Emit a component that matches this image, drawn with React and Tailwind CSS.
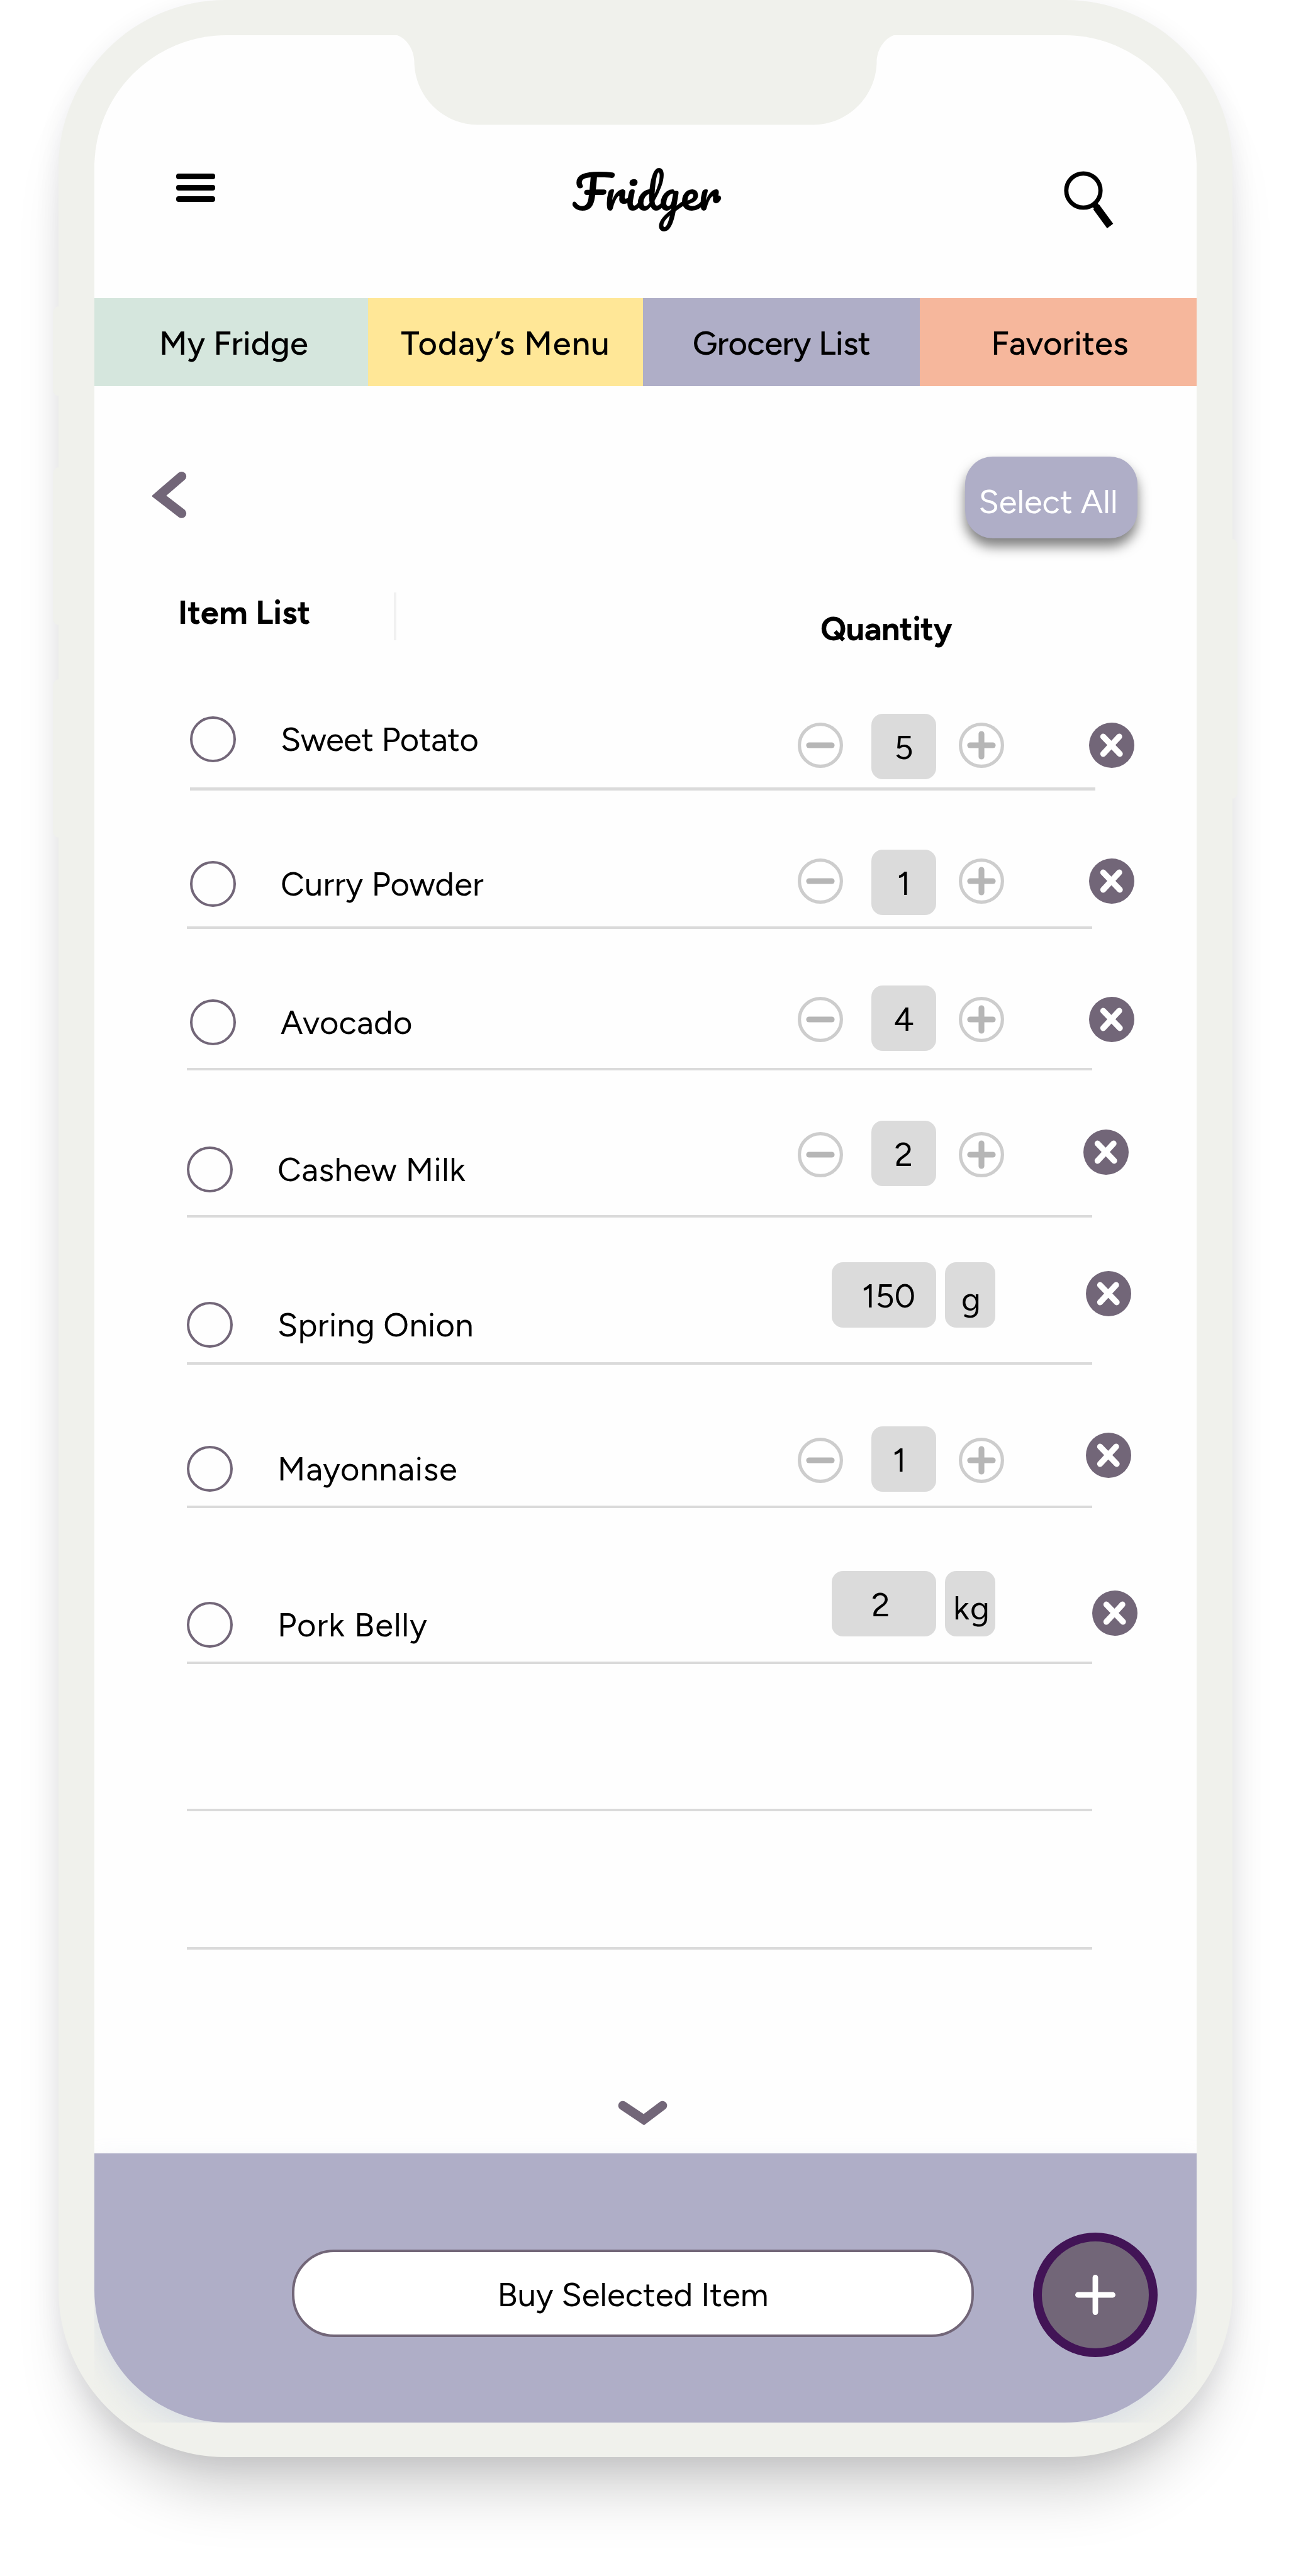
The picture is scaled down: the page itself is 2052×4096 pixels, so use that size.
import React from "react";

const SANS = "font-['Figtree','Lato',sans-serif]";

const TABS = [
  { label: "My Fridge", className: "w-[435px] bg-[#d5e6dd] pl-[8px] tracking-[0.15px]" },
  { label: "Today’s Menu", className: "w-[437px] bg-[#ffe797] tracking-[1.1px]" },
  { label: "Grocery List", className: "w-[440px] bg-[#afaec7] tracking-[-0.6px]" },
  { label: "Favorites", className: "w-[440px] bg-[#f6b79c] pl-[5px] tracking-[0.2px]" },
];

const ITEMS = [
  {
    name: "Sweet Potato", qty: "5",
    row: "h-[157px]", line: "h-[5px] ml-[5px]", label: "mt-[39px] ml-[5px] w-[966px] tracking-[-0.45px]",
    control: "mt-[35px]", step: "mt-[14px]", remove: "mt-[49px] ml-[135px]",
  },
  {
    name: "Curry Powder", qty: "1",
    row: "h-[220px]", line: "h-[4px]", label: "mt-[111.5px] ml-[5px] w-[966px] tracking-[0.2px]",
    control: "mt-[94px]", step: "mt-[14px]", remove: "mt-[107.5px] ml-[135px]",
  },
  {
    name: "Avocado", qty: "4",
    row: "h-[225px]", line: "h-[4px]", label: "mt-[111.5px] ml-[5px] w-[966px] tracking-[0.15px]",
    control: "mt-[90px]", step: "mt-[18px]", remove: "mt-[108px] ml-[135px]",
  },
  {
    name: "Cashew Milk", qty: "2",
    row: "h-[234px]", line: "h-[4px]", label: "mt-[120.5px] w-[971px] tracking-[0.45px]",
    control: "mt-[80px]", step: "mt-[18px]", remove: "mt-[94px] ml-[126px]",
  },
  {
    name: "Spring Onion", qty: "150", unit: "g", qtyPad: "pl-[15px]", unitPad: "pl-[3px]",
    row: "h-[234px]", line: "h-[4px]", label: "mt-[134px] w-[971px] tracking-[0.3px]",
    control: "mt-[71px]", remove: "mt-[85px] ml-[130px]",
  },
  {
    name: "Mayonnaise", qty: "1", qtyPad: "pr-[14px]",
    row: "h-[228px]", line: "h-[4px]", label: "mt-[129px] w-[971px] tracking-[0.75px]",
    control: "mt-[98px]", step: "mt-[18px]", remove: "mt-[107.5px] ml-[130px]",
  },
  {
    name: "Pork Belly", qty: "2", unit: "kg", qtyPad: "pr-[10px]", unitPad: "pl-[6px] tracking-[2px]",
    row: "h-[248px]", line: "h-[4px]", label: "mt-[148.5px] w-[971px] tracking-[1.1px]",
    control: "mt-[100px]", remove: "mt-[131px] ml-[140px]",
  },
];

const EMPTY_ROWS = ["h-[234px]", "h-[220px]"];

function StepIcon({ plus, className }) {
  return (
    <svg viewBox="0 0 72 72" className={`h-[72px] w-[72px] shrink-0 ${className}`}>
      <circle cx="36" cy="36" r="33.4" fill="#fff" stroke="#cdcdcd" strokeWidth="5.2" />
      <g stroke="#b6b6b6" strokeWidth="9.2" strokeLinecap="round">
        <path d="M18 36H54" />
        {plus && <path d="M36 18V54" />}
      </g>
    </svg>
  );
}

function RemoveIcon({ className }) {
  return (
    <svg viewBox="0 0 72 72" className={`h-[72px] w-[72px] shrink-0 ${className}`}>
      <circle cx="36" cy="36" r="36" fill="#726678" />
      <path d="M22.5 22.3L49 49.7M48 22.3L22.5 49.7" stroke="#fff" strokeWidth="9.4" strokeLinecap="round" />
    </svg>
  );
}

function Quantity({ item }) {
  if (item.unit) {
    return (
      <div className={`flex w-[328px] shrink-0 gap-[14px] pl-[54px] ${item.control}`}>
        <div className={`h-[104px] w-[166px] rounded-[18px] bg-[#dbdbdb] text-center leading-[107px] ${item.qtyPad}`}>{item.qty}</div>
        <div className={`h-[104px] w-[80px] rounded-[18px] bg-[#dbdbdb] text-center leading-[117px] ${item.unitPad}`}>{item.unit}</div>
      </div>
    );
  }
  return (
    <div className={`flex w-[328px] shrink-0 items-start ${item.control}`}>
      <StepIcon className={item.step} />
      <div className={`ml-[45px] mr-[36px] h-[104px] w-[103px] rounded-[18px] bg-[#dbdbdb] text-center leading-[107px] ${item.qtyPad ?? ""}`}>{item.qty}</div>
      <StepIcon plus className={item.step} />
    </div>
  );
}

function ItemRow({ item }) {
  return (
    <li className={`flex flex-col ${item.row}`}>
      <div className="flex min-h-0 flex-1 items-start">
        <div className={`flex shrink-0 items-center gap-[71px] ${item.label}`}>
          <span className="h-[73px] w-[73px] rounded-full border-4 border-[#726678]" />
          <span className="h-[73px] leading-[73px] whitespace-nowrap">{item.name}</span>
        </div>
        <Quantity item={item} />
        <RemoveIcon className={item.remove} />
      </div>
      <div className={`w-[1439px] shrink-0 bg-[#dadada] ${item.line}`} />
    </li>
  );
}

function Header() {
  return (
    <header className="flex h-[418px] shrink-0 items-start pl-[130px] pr-[132px]">
      <div className="mt-[220px] flex w-[62px] flex-col gap-[9px]">
        <span className="h-[9px] rounded-[4px] bg-black" />
        <span className="h-[9px] rounded-[4px] bg-black" />
        <span className="h-[9px] rounded-[4px] bg-black" />
      </div>
      <h1 className="ml-[568px] mt-[184px] h-[130px] font-['Pacifico',cursive] text-[71.7px] leading-[130px]">Fridger</h1>
      <svg viewBox="0 0 80 92" className="ml-auto mt-[215px] h-[92px] w-[80px]">
        <circle cx="32" cy="32" r="27.2" fill="none" stroke="#000" strokeWidth="6.8" />
        <path d="M50 54L71.500 83.500" stroke="#000" strokeWidth="10" />
        <path d="M56 63L71 83.500" stroke="#000" strokeWidth="12" strokeLinecap="square" />
      </svg>
    </header>
  );
}

export default function App() {
  return (
    <div className={`h-[4096px] w-[2052px] overflow-hidden bg-white pl-[93px] text-[52.5px] text-black ${SANS}`}>
      <div className="relative h-[3907px] w-[1866px] rounded-[266px] bg-[#f0f1ec] px-[57px] py-[56px] shadow-[0_85px_100px_-40px_rgba(0,0,0,0.21),0_10px_40px_rgba(20,20,50,0.08)]">
        <span className="absolute -left-[9px] top-[487px] h-[143px] w-[10px] rounded-l-[10px] bg-[#f0f1ec]" />
        <span className="absolute -left-[9px] top-[743px] h-[251px] w-[10px] rounded-l-[10px] bg-[#f0f1ec]" />
        <span className="absolute -left-[9px] top-[1080px] h-[252px] w-[10px] rounded-l-[10px] bg-[#f0f1ec]" />
        <span className="absolute -right-[8px] top-[857px] h-[413px] w-[9px] rounded-r-[10px] bg-[#f0f1ec]" />

        <div className="flex h-[3796px] w-[1752px] flex-col overflow-hidden">
          <main className="flex h-[3368px] shrink-0 flex-col rounded-t-[210px] bg-[#fefefe]">
            <Header />

            <nav className="flex h-[140px] shrink-0 text-center font-medium leading-[144px]">
              {TABS.map((tab) => (
                <div key={tab.label} className={tab.className}>{tab.label}</div>
              ))}
            </nav>

            <div className="flex h-[328px] shrink-0 items-start justify-between pl-[92px] pr-[94px]">
              <svg viewBox="0 0 56 76" className="mt-[135px] h-[76px] w-[56px]">
                <path d="M46.6 8.4L10.6 39.4L46.6 67.3" fill="none" stroke="#726678" strokeWidth="15" strokeLinecap="round" />
              </svg>
              <button className="mt-[112px] h-[130px] w-[274px] rounded-[44px] bg-[#afaec7] pr-[10px] text-center leading-[144px] text-white shadow-[0_13px_19px_rgba(0,0,0,0.5)]">
                Select All
              </button>
            </div>

            <div className="flex h-[102px] shrink-0 items-start pl-[133px] font-bold leading-[64px]">
              <span className="w-[343px]">Item List</span>
              <span className="h-[76px] w-[4px] bg-[#f1f1f1]" />
              <span className="ml-[674px] mt-[26px] tracking-[-0.8px]">Quantity</span>
            </div>

            <ul className="mt-[56px] flex shrink-0 flex-col pl-[147px]">
              {ITEMS.map((item) => (
                <ItemRow key={item.name} item={item} />
              ))}
              {EMPTY_ROWS.map((height) => (
                <li key={height} className={`flex flex-col justify-end ${height}`}>
                  <div className="h-[4px] w-[1439px] bg-[#dadada]" />
                </li>
              ))}
            </ul>

            <svg viewBox="0 0 80 42" className="ml-[831px] mt-[239px] h-[42px] w-[80px] shrink-0">
              <path d="M9 9L42.4 31.4L72 9" fill="none" stroke="#726678" strokeWidth="14.6" strokeLinecap="round" />
            </svg>
          </main>

          <footer className="flex h-[428px] shrink-0 items-start rounded-b-[210px] bg-[#afaec7] pl-[314px] shadow-[0_20px_40px_rgba(190,200,220,0.4)]">
            <button className="mt-[153px] h-[139px] w-[1084px] rounded-[67px] border-4 border-[#726678] bg-white text-center leading-[135px]">
              Buy Selected Item
            </button>
            <button className="ml-[94px] mt-[126px] flex h-[198px] w-[198px] items-center justify-center rounded-full border-[14px] border-[#421456] bg-[#726678]">
              <svg viewBox="0 0 64 64" className="h-[64px] w-[64px]">
                <path d="M32 4.4V59.6M4.4 32H59.6" stroke="#fff" strokeWidth="8.8" strokeLinecap="round" />
              </svg>
            </button>
          </footer>
        </div>

        <svg viewBox="0 0 826 145" className="absolute left-[520px] top-[54px] h-[145px] w-[826px]">
          <path d="M0 0V2H18C33 7 45 24 45.500 44C46 100 92 144.500 147 144.500H679C734 144.500 780 100 780.500 44C781 24 793 7 808 2H826V0Z" fill="#f0f1ec" />
        </svg>
      </div>
    </div>
  );
}
